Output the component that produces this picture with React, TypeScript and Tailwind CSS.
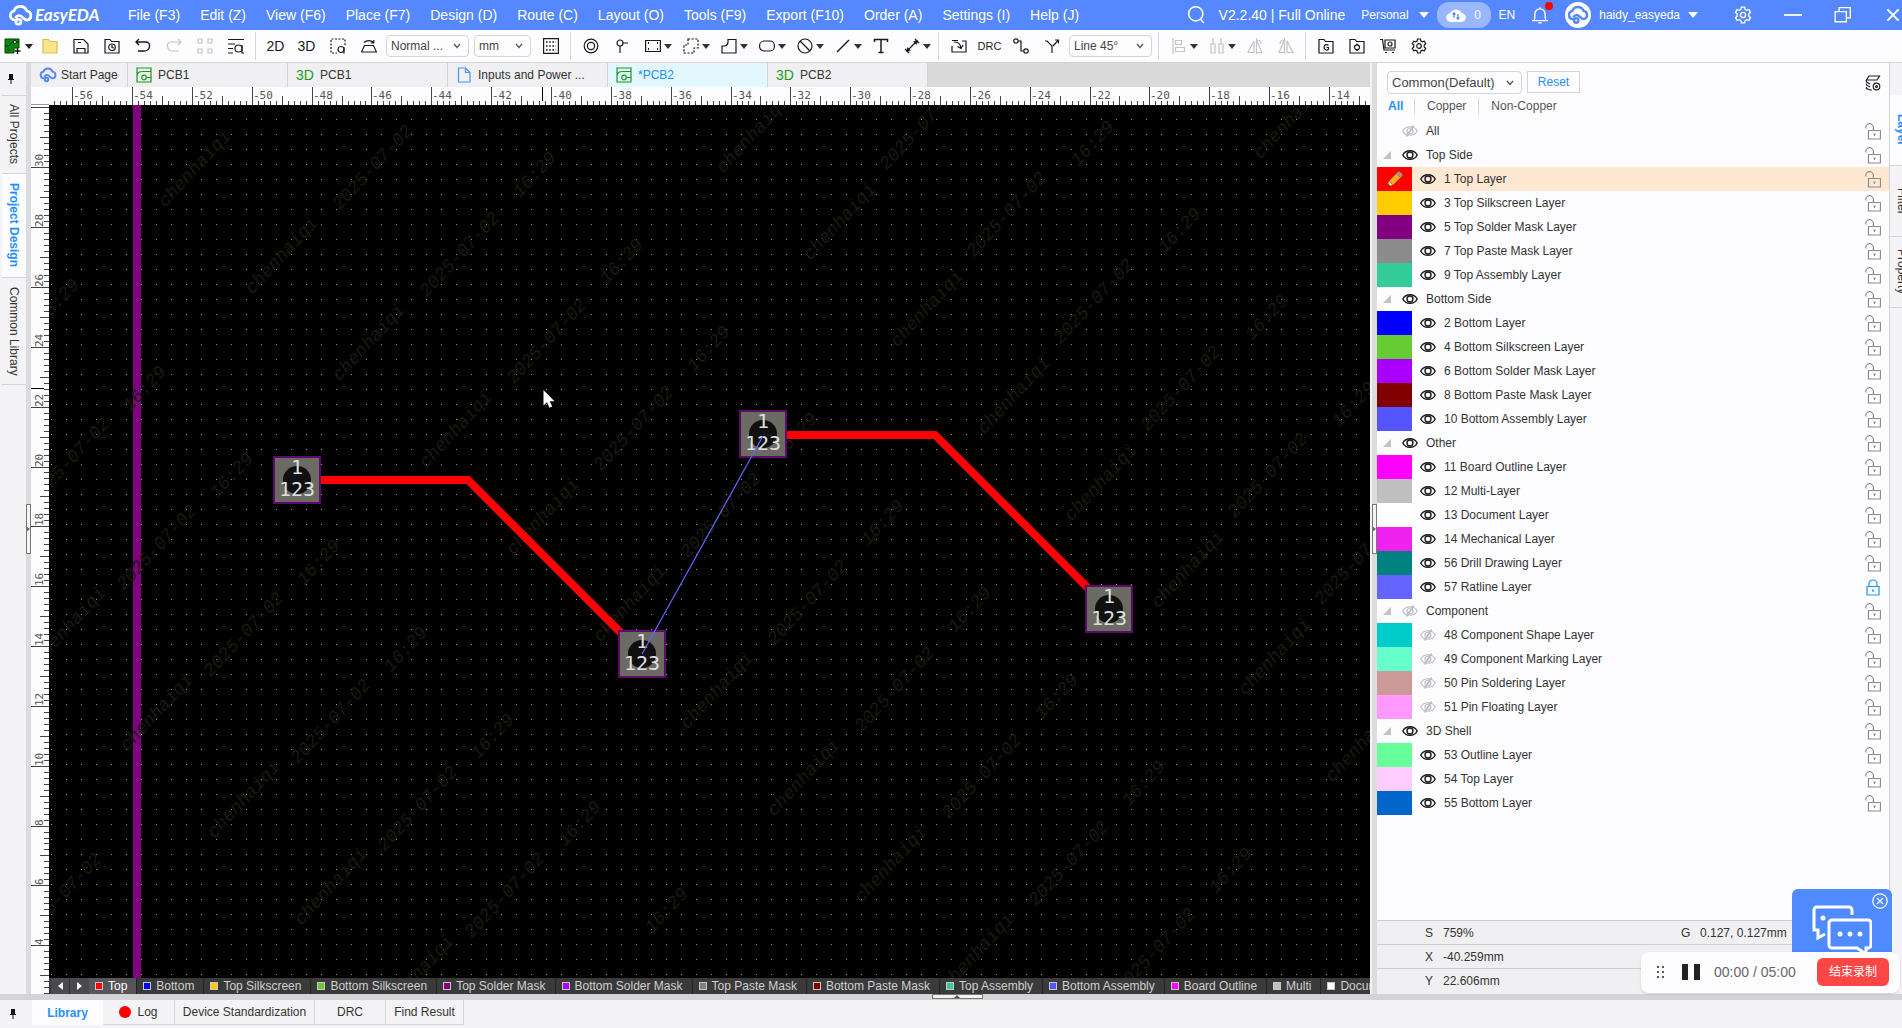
import type { ReactNode } from "react";

const menus = [
  "File (F3)", "Edit (Z)", "View (F6)", "Place (F7)", "Design (D)", "Route (C)", "Layout (O)",
  "Tools (F9)", "Export (F10)", "Order (A)", "Settings (I)", "Help (J)",
];

type Layer = { name: string; color?: string; group?: boolean; hidden?: boolean; locked?: boolean; active?: boolean };

const layers: Layer[] = [
  { name: "Top Side", group: true },
  { name: "1 Top Layer", color: "#ff0000", active: true },
  { name: "3 Top Silkscreen Layer", color: "#ffcc00" },
  { name: "5 Top Solder Mask Layer", color: "#800080" },
  { name: "7 Top Paste Mask Layer", color: "#8c8c8c" },
  { name: "9 Top Assembly Layer", color: "#33cc99" },
  { name: "Bottom Side", group: true },
  { name: "2 Bottom Layer", color: "#0000ff" },
  { name: "4 Bottom Silkscreen Layer", color: "#66cc33" },
  { name: "6 Bottom Solder Mask Layer", color: "#aa00ff" },
  { name: "8 Bottom Paste Mask Layer", color: "#800000" },
  { name: "10 Bottom Assembly Layer", color: "#5555ff" },
  { name: "Other", group: true },
  { name: "11 Board Outline Layer", color: "#ff00ff" },
  { name: "12 Multi-Layer", color: "#c0c0c0" },
  { name: "13 Document Layer", color: "#ffffff" },
  { name: "14 Mechanical Layer", color: "#f022f0" },
  { name: "56 Drill Drawing Layer", color: "#008080" },
  { name: "57 Ratline Layer", color: "#6464ff", locked: true },
  { name: "Component", group: true, hidden: true },
  { name: "48 Component Shape Layer", color: "#00cccc", hidden: true },
  { name: "49 Component Marking Layer", color: "#66ffcc", hidden: true },
  { name: "50 Pin Soldering Layer", color: "#cc9999", hidden: true },
  { name: "51 Pin Floating Layer", color: "#ff99ff", hidden: true },
  { name: "3D Shell", group: true },
  { name: "53 Outline Layer", color: "#66ff99" },
  { name: "54 Top Layer", color: "#ffccff" },
  { name: "55 Bottom Layer", color: "#0066cc" },
];

const layerTabs = [
  ["Top", "#ff0000"], ["Bottom", "#0000ff"], ["Top Silkscreen", "#ffcc00"], ["Bottom Silkscreen", "#66cc33"],
  ["Top Solder Mask", "#800080"], ["Bottom Solder Mask", "#aa00ff"], ["Top Paste Mask", "#808080"],
  ["Bottom Paste Mask", "#800000"], ["Top Assembly", "#33cc99"], ["Bottom Assembly", "#5555ff"],
  ["Board Outline", "#ff00ff"], ["Multi", "#c0c0c0"], ["Document", "#ffffff"],
];

function Svg({ children, s = 16, w = 1.2 }: { children: ReactNode; s?: number; w?: number }) {
  return (
    <svg width={s} height={s} viewBox="0 0 16 16" fill="none" stroke="currentColor" strokeWidth={w} className="shrink-0" aria-hidden="true">
      {children}
    </svg>
  );
}

const GearPath = () => (
  <>
    <path d="M6.6 1h2.8l.5 2 1.4.8 2-.6 1.4 2.4L13.200 7v2l1.500 1.400-1.400 2.400-2-.6-1.400.8-.5 2H6.600l-.5-2-1.400-.8-2 .6L1.300 10.400 2.800 9V7L1.300 5.600l1.400-2.400 2 .6L6.100 3z" />
    <circle cx="8" cy="8" r="2.300" />
  </>
);

function Caret({ className = "" }: { className?: string }) {
  return (
    <svg width="10" height="6" viewBox="0 0 10 6" fill="currentColor" className={className} aria-hidden="true">
      <path d="M0 0h10L5 6z" />
    </svg>
  );
}

function Tool({ label, children, menu, off }: { label: string; children: ReactNode; menu?: boolean; off?: boolean }) {
  return (
    <button aria-label={label} className={`flex h-8 shrink-0 items-center ${menu ? "w-[38px]" : "w-[31px]"} ${off ? "text-[#c4c4c4]" : "text-[#1a1a1a]"}`}>
      <span className="flex w-[31px] shrink-0 justify-center">{children}</span>
      {menu && <Caret className="-ml-1 h-[5px] w-2 shrink-0 text-[#333]" />}
    </button>
  );
}

const Sep = () => <span className="mx-1 h-7 w-px shrink-0 bg-[#d4d4dc]" />;

function Pick({ label, value, className }: { label: string; value: string; className: string }) {
  return (
    <div className={`relative shrink-0 ${className}`}>
      <select aria-label={label} className="h-full w-full appearance-none rounded-sm border border-[#d4d4d8] bg-[#fdfdff] pl-1 text-[#444]">
        <option>{value}</option>
      </select>
      <svg width="8" height="6" viewBox="0 0 8 6" fill="none" stroke="#555" strokeWidth="1.3" className="pointer-events-none absolute top-1/2 right-2 -mt-[3px]">
        <path d="M1 1l3 3.500L7 1" />
      </svg>
    </div>
  );
}

function CloudLogo({ s, color }: { s: number; color: string }) {
  return (
    <svg width={s} height={s} viewBox="0 0 24 24" fill="none" stroke={color} strokeWidth="2.600" aria-hidden="true">
      <path d="M9 16.500H6.500a4.500 4.500 0 0 1-.7-8.900A6.500 6.500 0 0 1 18 7.500a4.600 4.600 0 0 1 .5 9c-4 .3-4-4.500-8-4.500-2 0-2.500 1-3.500 2.500" />
      <circle cx="10" cy="18" r="2.400" />
    </svg>
  );
}

function BoardIcon() {
  return (
    <Svg>
      <path stroke="#1a9a1a" d="M1 1h14v14H1zM1 9c0-4 3-4.500 6-4.500h8M10.500 10.500H15" />
      <circle cx="8" cy="10.500" r="2.300" stroke="#1a9a1a" />
    </Svg>
  );
}

const ThreeD = ({ className = "" }: { className?: string }) => (
  <span className={`w-[18px] shrink-0 text-sm leading-4 ${className}`}>3D</span>
);

function Eye({ off }: { off?: boolean }) {
  return (
    <svg width="16" height="12" viewBox="0 0 16 12" fill="none" stroke={off ? "#bdbdc4" : "#1a1a1a"} strokeWidth={off ? 1.1 : 1.4} aria-hidden="true">
      <path d="M.8 6C3.500.3 12.500.3 15.200 6 12.500 11.700 3.500 11.700.8 6z" />
      <circle cx="8" cy="6" r="3" />
      {off && <path d="M11.500.5L4.500 11.500" strokeWidth="1.800" />}
    </svg>
  );
}

function Lock({ closed }: { closed?: boolean }) {
  return (
    <svg width="16" height="17" viewBox="0 0 16 17" fill="none" stroke={closed ? "#1e90ff" : "#8c8c8c"} strokeWidth="1.200" aria-hidden="true">
      {closed ? (
        <path d="M2 7.500h12v8.500H2zM4 7.500V5a4 4 0 0 1 8 0v2.500M8 10.500v2.500M7 11h2" />
      ) : (
        <path d="M3.500 7.500h12v8.500h-12zM.8 5.500V4.500a3.800 3.800 0 0 1 7.600 0v3M9.500 10.500v2.500M8.500 11h2" />
      )}
    </svg>
  );
}

function Header() {
  return (
    <header className="flex h-[30px] shrink-0 items-center bg-[#5588ff] text-white">
      <div className="flex w-[118px] shrink-0 items-center pl-2">
        <CloudLogo s={25} color="#fff" />
        <span className="ml-0.5 font-['Lato'] text-[17px] font-bold italic">EasyEDA</span>
      </div>
      <nav className="flex text-sm whitespace-nowrap">
        {menus.map((m) => (
          <button key={m} className="px-[10px]">{m}</button>
        ))}
      </nav>
      <div className="ml-auto flex shrink-0 items-center text-xs whitespace-nowrap">
        <button aria-label="Search" className="mr-3">
          <Svg s={20}><circle cx="7" cy="7" r="5.700" /><path d="M11 11.500l2.500 3" /></Svg>
        </button>
        <span className="text-sm">V2.2.40 | Full Online</span>
        <button className="ml-4 flex items-center gap-[10px]">Personal <Caret /></button>
        <button className="ml-2 flex h-[26px] w-[54px] items-center justify-center gap-2 rounded-xl bg-white/40">
          <svg width="20" height="16" viewBox="0 0 20 16" fill="#fff" aria-hidden="true">
            <path d="M5 15a4.500 4.500 0 0 1-.5-9A6 6 0 0 1 15.500 6a4.500 4.500 0 0 1-.5 9z" />
            <path d="M8 11V6M6.500 7.500L8 6l1.500 1.500M12 7v5M10.500 10.500L12 12l1.500-1.500" fill="none" stroke="#5588ff" strokeWidth="1.300" />
          </svg>
          0
        </button>
        <button className="ml-2">EN</button>
        <button aria-label="Notifications" className="relative ml-4">
          <Svg s={18}><path d="M1 13h14M3 13c0-2 .5-2 .5-6a4.500 4.500 0 0 1 9 0c0 4 .5 4 .5 6M6.500 15h3M8 1v1.500" /></Svg>
          <span className="absolute -top-1 -right-1 size-2 rounded-full bg-[#f00]" />
        </button>
        <span className="ml-4 flex size-[26px] items-center justify-center rounded-full bg-white">
          <CloudLogo s={22} color="#5588ff" />
        </span>
        <button className="ml-2 flex items-center gap-2">haidy_easyeda <Caret /></button>
        <button aria-label="Preferences" className="ml-9"><Svg s={18}><GearPath /></Svg></button>
        <button aria-label="Minimize" className="ml-8"><Svg s={18} w={1.6}><path d="M0 8h16" /></Svg></button>
        <button aria-label="Restore" className="ml-8"><Svg s={18}><path d="M1 5h10v9H1zM4.500 5V1.500h10v9H11" /></Svg></button>
        <button aria-label="Close" className="ml-8"><Svg s={18} w={1.8}><path d="M3 3l10 10M13 3L3 13" /></Svg></button>
      </div>
    </header>
  );
}

function Toolbar() {
  return (
    <div className="flex h-[33px] shrink-0 items-center border-b border-[#d4d4d4] bg-[#fdfdff] text-xs">
      <button aria-label="New" className="flex w-[34px] items-center gap-1 pl-1 text-[#222]">
        <svg width="17" height="17" viewBox="0 0 17 17" aria-hidden="true">
          <path d="M1 1h14v9h-5v5H1z" fill="#0a8a0a" stroke="#063f06" />
          <path d="M1 8h4l3-4h7M3 12h3" stroke="#022" fill="none" />
          <circle cx="11" cy="4" r="1.500" fill="#fff" stroke="#022" />
          <path d="M13.500 10v6M10.500 13h6" stroke="#111" strokeWidth="1.300" />
        </svg>
        <Caret className="h-[5px] w-2" />
      </button>
      <Tool label="Open"><Svg><path d="M1 1.500h5.500L8 3.500h7v11.500H1z" fill="#fbe58c" stroke="#d9bf55" /></Svg></Tool>
      <Tool label="Save"><Svg><path d="M1 1.500h9.500L15 6v9H1zM4 15v-4.500h8V15M5 4.500h3" /></Svg></Tool>
      <Tool label="Open recent"><Svg><path d="M1 1.500h5L7.500 3.500H15V15H1z" /><circle cx="8" cy="9.300" r="3.300" /><path d="M8 7v2.500l2 .5" /></Svg></Tool>
      <Tool label="Undo"><Svg w={1.4}><path d="M1 4h10a3.500 3.500 0 0 1 3.500 4.500c-.5 3-3 4.500-5.500 4.500H3M4 1L1 4l3 3" /></Svg></Tool>
      <Tool label="Redo" off><Svg><path d="M15 4H5a3.500 3.500 0 0 0-3.500 4.500c.5 3 3 4.500 5.500 4.500h6M12 1l3 3-3 3" /></Svg></Tool>
      <Tool label="Arrange" off><Svg><path d="M1 1h4v4H1zM11 1h4v4h-4zM1 11h4v4H1zM11 11h4v4h-4z" /></Svg></Tool>
      <Tool label="Find"><Svg><path d="M0 1.500h16M0 6h7M0 10.500h5M0 15h5" /><circle cx="10.500" cy="10.500" r="3.500" /><path d="M14 7v8h2" /></Svg></Tool>
      <Sep />
      <Tool label="2D view"><span className="text-sm">2D</span></Tool>
      <Tool label="3D view"><span className="text-sm">3D</span></Tool>
      <Tool label="Zoom to selection"><Svg><path d="M15 7V1H1v14h6" strokeDasharray="2 1.500" /><circle cx="11" cy="11.500" r="3" /><path d="M14 9v6.500" /></Svg></Tool>
      <Tool label="Flip board"><Svg><path d="M3.500 7.500h9l3 6.500H.5zM3 4.500c2.500-2.500 7-2.500 9.500 0M12.800 2v3H9.800" /></Svg></Tool>
      <Pick label="Display mode" value="Normal ..." className="ml-0.5 h-[22px] w-[83px]" />
      <Pick label="Unit" value="mm" className="mr-1 ml-[5px] h-[22px] w-[57px]" />
      <Tool label="Grid"><Svg><path d="M.6.600h14.800v14.800H.6z" /><path d="M3 4h10M3 8h10M3 12h10" strokeDasharray="1.600 1.600" strokeWidth="1.600" /></Svg></Tool>
      <Sep />
      <Tool label="Via"><Svg><circle cx="8" cy="8" r="6.800" /><circle cx="8" cy="8" r="3.600" /></Svg></Tool>
      <Tool label="Pad"><Svg><circle cx="6" cy="5" r="3" /><path d="M9 5h5M6 8v7" /></Svg></Tool>
      <Tool label="Rectangle" menu><Svg><path d="M.6 2.500h14.800v11H.6z" /><path d="M3 5h1M12 5h1M3 11h1M12 11h1" strokeWidth="1.800" /></Svg></Tool>
      <Tool label="Region" menu><Svg><path d="M5 1h10v9h-4v5H1V7h4z" strokeDasharray="2.200 1.400" /></Svg></Tool>
      <Tool label="Copper" menu><Svg><path d="M7 1.500h8V15H1V8h3c2-.5 3-2 3-4z" /></Svg></Tool>
      <Tool label="Slot" menu><Svg><rect x=".6" y="3" width="14.800" height="10" rx="4.500" /></Svg></Tool>
      <Tool label="Forbidden region" menu><Svg><circle cx="8" cy="8" r="7" /><path d="M3 3l10 10" /></Svg></Tool>
      <Tool label="Line" menu><Svg w={1.5}><path d="M2 14L14 2" /></Svg></Tool>
      <Tool label="Text"><Svg w={1.5}><path d="M1.500 4V1.500h13V4M8 1.500v13M5.500 14.500h5" /></Svg></Tool>
      <Tool label="Dimension" menu><Svg><path d="M3.500 12.500l9-9M1 11l4 4M11 1l4 4" /><path d="M2.500 13.500l1-4 3 3zM13.500 2.500l-1 4-3-3z" fill="currentColor" strokeWidth=".5" /></Svg></Tool>
      <Sep />
      <Tool label="Import changes"><Svg><path d="M7 2.500H1M11 3h4v11H1V8M3 4c4 0 6 1 7 6M6.500 8.500L10 10.500l2-3.500" /></Svg></Tool>
      <Tool label="Design rule check"><span className="text-[11px]">DRC</span></Tool>
      <Tool label="Single route"><Svg><circle cx="3" cy="3" r="2.200" /><circle cx="13" cy="13" r="2.200" /><path d="M5.200 3H8v10h2.800" /></Svg></Tool>
      <Tool label="Differential route"><Svg><path d="M1 3h2l5 5v7M9 8l5-5.500M11 2h3.500v3.500" /></Svg></Tool>
      <Pick label="Routing corner" value="Line 45°" className="mr-0.5 ml-0.5 h-[22px] w-[83px]" />
      <Sep />
      <Tool label="Align" menu off><Svg><path d="M2 0v16M4.500 2.500h6v4h-6zM4.500 9.500h9v4h-9z" /></Svg></Tool>
      <Tool label="Distribute" menu off><Svg><path d="M4 0v6M12 0v6M2 6h4v9H2zM10 6h4v9h-4z" /></Svg></Tool>
      <Tool label="Mirror" off><Svg><path d="M7 3v11.500H1zM9.500 0v16M10 3l5 11.500h-5M10 2c3 0 4 1.500 4 4" /></Svg></Tool>
      <Tool label="Flip" off><Svg><path d="M9 3v11.500h6zM6.500 0v16M6 3L1 14.500h5M2 6c0-2.500 1-4 4-4" /></Svg></Tool>
      <Sep />
      <Tool label="Gerber"><Svg><path d="M1 1.500h5L7.500 3.500H15V15H1z" /><path d="M10.500 7.500c-1-1.500-4.500-1.300-4.500 1.800s3.500 3.400 4.500 1.800V9.500H8.500" /></Svg></Tool>
      <Tool label="Pick and place"><Svg><path d="M1 1.500h5L7.500 3.500H15V15H1z" /><circle cx="8" cy="9.300" r="2.500" /><path d="M8 5.500v2M8 11v2M5 9.300h1M10 9.300h1" /></Svg></Tool>
      <Tool label="Order"><Svg><path d="M0 1.500h2.500L4 12h11M5 2h10v8H5zM5 14.500h2M12 14.500h2" /><circle cx="10" cy="6" r="2" /></Svg></Tool>
      <Tool label="Settings"><Svg><GearPath /></Svg></Tool>
    </div>
  );
}

function DocTabs() {
  const tabs = [
    { icon: <BoardIcon />, name: "PCB1" },
    { icon: <ThreeD className="text-[#1a9a1a]" />, name: "PCB1" },
    { icon: <Svg><path stroke="#4a90ff" d="M2.500 1h7L14 5.500V15H2.500zM9.500 1v4.500H14" /></Svg>, name: "Inputs and Power ..." },
    { icon: <BoardIcon />, name: "*PCB2", active: true },
    { icon: <ThreeD className="text-[#1a9a1a]" />, name: "PCB2" },
  ];
  return (
    <div role="tablist" className="flex h-6 shrink-0 bg-[#d9d9d9] text-xs text-[#333]">
      <button role="tab" className="flex w-[97px] items-center gap-1 border-r border-[#d4d4d4] bg-[#f0f0f2] pl-2 whitespace-nowrap">
        <CloudLogo s={18} color="#5588ff" />Start Page
      </button>
      {tabs.map((t, i) => (
        <button
          key={i}
          role="tab"
          aria-selected={!!t.active}
          className={`flex w-40 items-center gap-[6px] border-r border-[#d4d4d4] pl-2 whitespace-nowrap ${t.active ? "bg-[#e2f7ff] text-[#1e90ff]" : "bg-[#f0f0f2]"}`}
        >
          {t.icon}
          <span>{t.name}</span>
        </button>
      ))}
    </div>
  );
}

// 1mm is 29.92px at the current zoom
const MM = 29.92;

function TopRuler() {
  const ticks = [];
  for (let i = -285; i <= -60; i++) ticks.push(i);
  return (
    <svg className="block h-[18px] w-full shrink-0 bg-[#fdfdff]" aria-hidden="true">
      {ticks.map((i) => {
        const x = Math.round(1716.8 + (i / 5) * MM);
        const top = i % 10 === 0 ? 0 : i % 5 === 0 ? 9 : 14;
        return x > 20 && <rect key={i} x={x} y={top} width="1" height={18 - top} fill="#444" />;
      })}
      {ticks.filter((i) => i % 10 === 0).map((i) => (
        <text key={i} x={Math.round(1716.8 + (i / 5) * MM) + 1} y="12" fontSize="11" fill="#555" className="font-['DejaVu_Sans_Mono']">{i / 5}</text>
      ))}
      <rect x="511" y="0" width="1" height="14" fill="#000" />
      <rect x="0" y="17" width="18" height="1" fill="#999" />
    </svg>
  );
}

function SideRuler() {
  const ticks = [];
  for (let i = 12; i <= 160; i++) ticks.push(i);
  const at = (i: number) => Math.round(62.3 + (30 - i / 5) * MM);
  return (
    <svg className="block w-[18px] shrink-0 bg-[#fdfdff]" aria-hidden="true">
      {ticks.map((i) => {
        const w = i % 10 === 0 ? 18 : i % 5 === 0 ? 9 : 5;
        return <rect key={i} x={18 - w} y={at(i)} width={w} height="1" fill="#444" />;
      })}
      {ticks.filter((i) => i % 10 === 0 && i < 160).map((i) => (
        <text key={i} transform={`translate(12 ${at(i)}) rotate(-90)`} fontSize="11" fill="#555" className="font-['DejaVu_Sans_Mono']">{i / 5}</text>
      ))}
      <rect x="0" y="283" width="13" height="1" fill="#000" />
    </svg>
  );
}

// text, first centre x/y, repeat count; repeats run down the diagonal
const marks: [string, number, number, number][] = [
  ["chenhaiqi", 145, 63, 10], ["2025-07-02", 323, 62, 10], ["16:29", 485, 69, 9],
  ["chenhaiqi", 703, 29, 8], ["2025-07-02", 870, 22, 6], ["16:29", 1043, 38, 4],
  ["16:29", 8, 196, 8], ["2025-07-02", 20, 355, 6], ["chenhaiqi", 20, 520, 5],
  ["chenhaiqi", 1240, 15, 1], ["2025-07-02", 12, 790, 1],
];

function Pad({ x, y }: { x: number; y: number }) {
  return (
    <g className="font-['DejaVu_Sans_Mono']" fontSize="20" fill="#dedede" textAnchor="middle">
      <rect x={x - 23} y={y - 23} width="46" height="46" fill="#6b6b64" stroke="#5c0a6c" strokeWidth="2" />
      <circle cx={x} cy={y} r="14" fill="#101010" />
      <text x={x} y={y - 6}>1</text>
      <text x={x} y={y + 16}>123</text>
    </g>
  );
}

function Board() {
  return (
    <svg className="block min-h-0 w-full flex-1 bg-black">
      <defs>
        <pattern id="dots" width="15" height="15" patternUnits="userSpaceOnUse">
          <rect x="2" y="14" width="1" height="1" fill="#9a9a9a" />
        </pattern>
      </defs>
      <rect width="100%" height="100%" fill="url(#dots)" />
      <rect x="84" width="8" height="100%" fill="#800080" />
      <g fontSize="18" fontStyle="italic" fill="#1b1b0e" textAnchor="middle" className="font-['Liberation_Mono']">
        {marks.flatMap(([text, x, y, n]) =>
          Array.from({ length: n }, (_, k) => (
            <text key={`${text}${x}-${k}`} transform={`translate(${x + k * 87} ${y + k * 87}) rotate(-47)`} y="6">{text}</text>
          ))
        )}
      </g>
      <path d="M248 375H419L593 549M714 330H886L1060 504" fill="none" stroke="#f00" strokeWidth="8" />
      <Pad x={248} y={375} />
      <Pad x={714} y={329} />
      <Pad x={593} y={549} />
      <Pad x={1060} y={504} />
      <path d="M714 331L593 549" stroke="#6464ff" strokeWidth="1.200" />
      <path d="M494.500 285v15.500l3.500-3.200 2.500 5.500 2.700-1.200-2.500-5.300h4.800z" fill="#fff" />
    </svg>
  );
}

function LayerTabs() {
  return (
    <div className="flex h-4 shrink-0 overflow-hidden bg-[#3a3a3a] text-xs leading-4 text-[#d0d0d0]">
      <div className="ml-0.5 flex w-[38px] shrink-0 bg-[#4a4a4e]">
        <button aria-label="Previous" className="flex w-[19px] items-center justify-center border-r border-[#333]">
          <svg width="5" height="8" viewBox="0 0 5 8" fill="#fff"><path d="M5 0v8L0 4z" /></svg>
        </button>
        <button aria-label="Next" className="flex w-[19px] items-center justify-center">
          <svg width="5" height="8" viewBox="0 0 5 8" fill="#fff"><path d="M0 0v8l5-4z" /></svg>
        </button>
      </div>
      {layerTabs.map(([name, color], i) => (
        <button key={name} className={`flex shrink-0 items-center gap-[5px] border-r border-[#222] pr-[9px] pl-[6px] whitespace-nowrap ${i === 0 ? "bg-[#55555a] text-white" : ""}`}>
          <span className="size-2 border border-[#c8c8c8]" style={{ backgroundColor: color }} />
          {name}
        </button>
      ))}
    </div>
  );
}

function LayerRow({ layer }: { layer: Layer }) {
  return (
    <li className={`flex h-6 items-center ${layer.active ? "bg-[#ffe8d2]" : ""}`}>
      {layer.group ? (
        <span className="flex w-[25px] pl-[6px]">
          <svg width="8" height="8" viewBox="0 0 8 8" fill="#c0c0c0"><path d="M8 0v8H0z" /></svg>
        </span>
      ) : (
        <span className="flex h-6 w-[43px] items-center">
          <span className="flex h-6 w-[35px] items-center justify-center" style={{ backgroundColor: layer.color }}>
            {layer.active && (
              <svg width="16" height="16" viewBox="0 0 16 16" aria-hidden="true">
                <path d="M.5 15.500L2 10l4 4z" fill="#f3d7a0" />
                <path d="M.5 15.500l.7-2.500 1.800 1.800z" fill="#222" />
                <path d="M2 10l7.500-7.500 4 4L6 14z" fill="#f2b21b" stroke="#a86a00" strokeWidth=".6" />
                <path d="M9.500 2.500l1.500-1.500q1-1 2 0l2 2q1 1 0 2l-1.500 1.500z" fill="#c98a78" stroke="#777" strokeWidth=".6" />
              </svg>
            )}
          </span>
        </span>
      )}
      <button aria-label={`Show ${layer.name}`}><Eye off={layer.hidden} /></button>
      <span className="ml-2 flex-1">{layer.name}</span>
      <button aria-label={`Lock ${layer.name}`} className="mr-2"><Lock closed={layer.locked} /></button>
    </li>
  );
}

function LayerPanel() {
  return (
    <aside className="flex w-[512px] shrink-0 flex-col bg-[#fdfdff] text-xs text-[#333]">
      <div className="flex h-8 items-start pt-2 pr-2 pl-[10px]">
        <Pick label="Layer preset" value="Common(Default)" className="h-[23px] w-[135px] text-[13px]" />
        <button className="ml-[5px] h-[22px] w-[53px] border border-[#d4d4dc] text-[#1e90ff]">Reset</button>
        <button aria-label="Layer manager" className="mt-1 ml-auto text-[#222]">
          <Svg><path d="M4 1h10.500L12 5H1.500zM1.500 5v2L5 9M1.500 8.500v1.500L5 12M1.500 12v1.500L5 15h2" /><circle cx="11.500" cy="11.500" r="3.300" /><circle cx="11.500" cy="11.500" r="1" /></Svg>
        </button>
      </div>
      <div className="flex h-6 items-center pb-[3px] pl-[11px] text-[#555]">
        <button className="w-[26px] text-left font-bold text-[#1e90ff]">All</button>
        <button className="h-4 border-l border-[#d8d8d8] px-3 leading-4">Copper</button>
        <button className="h-4 border-l border-[#d8d8d8] px-3 leading-4">Non-Copper</button>
      </div>
      <ul className="min-h-0 flex-1">
        <li className="flex h-6 items-center pl-[25px]">
          <button aria-label="Show all"><Eye off /></button>
          <span className="ml-2 flex-1">All</span>
          <button aria-label="Lock all" className="mr-2"><Lock /></button>
        </li>
        {layers.map((l) => <LayerRow key={l.name} layer={l} />)}
      </ul>
      <dl className="shrink-0 bg-[#f0f0f2] pb-0.5 text-[#333]">
        <div className="flex h-6 items-center border-t border-[#ccccd4] pl-12">
          <dt className="w-[18px]">S</dt><dd className="w-[238px]">759%</dd>
          <dt className="w-[19px]">G</dt><dd>0.127, 0.127mm</dd>
        </div>
        <div className="flex h-6 items-center border-t border-[#ccccd4] pl-12">
          <dt className="w-[18px]">X</dt><dd>-40.259mm</dd>
        </div>
        <div className="flex h-6 items-center border-t border-[#ccccd4] pl-12">
          <dt className="w-[18px]">Y</dt><dd>22.606mm</dd>
        </div>
      </dl>
    </aside>
  );
}

const Pin = () => (
  <svg width="6" height="10" viewBox="0 0 6 10" fill="#111" aria-hidden="true">
    <path d="M1 0h4v5h1v1H3.500v4h-1V6H0V5h1z" />
  </svg>
);

function Splitter({ className = "" }: { className?: string }) {
  return (
    <div className={`flex shrink-0 items-center bg-[#dcdcde] ${className}`}>
      <button aria-label="Toggle panel" className="flex h-[50px] w-[5px] items-center border border-[#777] bg-[#f4f4f4]">
        <svg width="4" height="6" viewBox="0 0 4 6" fill="#666"><path d="M0 0v6l4-3z" /></svg>
      </button>
    </div>
  );
}

function Recorder() {
  return (
    <div className="absolute right-0.5 bottom-[35px] flex h-[41px] w-[259px] items-center rounded-lg bg-[#fdfdff] pb-px shadow">
      <svg width="7" height="13" viewBox="0 0 7 13" fill="#555" className="ml-4" aria-hidden="true">
        {[0, 5, 10].map((y) => <path key={y} d={`M0 ${y}h2v2H0zM5 ${y}h2v2H5z`} />)}
      </svg>
      <button aria-label="Pause" className="ml-[18px] flex gap-[6px]">
        <span className="h-4 w-[6px] bg-[#222]" />
        <span className="h-4 w-[6px] bg-[#222]" />
      </button>
      <span className="ml-[14px] text-sm text-[#666]">00:00 / 05:00</span>
      <button className="mr-[11px] ml-auto h-7 w-[72px] rounded-md bg-[#fb4646] text-xs text-white">结束录制</button>
    </div>
  );
}

export default function App() {
  return (
    <div className="relative flex h-screen w-full flex-col overflow-hidden bg-[#f4f4f6] font-['Liberation_Sans','Noto_Sans_CJK_SC',sans-serif]">
      <Header />
      <Toolbar />

      <div className="flex min-h-0 flex-1">
        <nav className="flex w-[26px] shrink-0 flex-col text-xs text-[#333]">
          <button aria-label="Pin sidebar" className="flex h-8 items-center justify-center pr-1"><Pin /></button>
          {["All Projects", "Project Design", "Common Library"].map((t, i) => (
            <button
              key={t}
              className={`ml-0.5 flex items-center justify-center border-t border-[#d4d4d4] px-1 [writing-mode:vertical-rl] ${i === 0 ? "h-[78px]" : i === 1 ? "h-[104px] bg-[#fdfdff] font-bold text-[#1e90ff]" : "h-[108px] border-b"}`}
            >
              {t}
            </button>
          ))}
        </nav>
        <Splitter className="w-[5px]" />

        <main className="flex min-w-0 flex-1 flex-col">
          <DocTabs />
          <TopRuler />
          <div className="flex min-h-0 flex-1">
            <SideRuler />
            <div className="flex min-w-0 flex-1 flex-col">
              <Board />
              <LayerTabs />
            </div>
          </div>
        </main>

        <Splitter className="w-[7px] border-l-2 border-[#f4f4f6]" />
        <LayerPanel />
        <nav className="flex w-[13px] shrink-0 flex-col overflow-hidden border-l border-[#d4d4d4] pt-8 text-xs text-[#333]">
          {["Layer", "Filter", "Property"].map((t, i) => (
            <button
              key={t}
              className={`flex h-[71px] w-6 shrink-0 items-center justify-center border-b border-[#d4d4d4] leading-4 [writing-mode:vertical-rl] ${i === 0 ? "bg-[#fdfdff] font-bold text-[#1e90ff]" : ""}`}
            >
              {t}
            </button>
          ))}
        </nav>
      </div>

      <div className="flex h-[6px] shrink-0 justify-center bg-[#d4d4d6]">
        <button aria-label="Toggle bottom panel" className="ml-3 flex h-[5px] w-[51px] items-center justify-center border border-[#777] bg-[#f4f4f4]">
          <svg width="6" height="3" viewBox="0 0 6 3" fill="#555"><path d="M3 0l3 3H0z" /></svg>
        </button>
      </div>
      <footer className="flex h-7 shrink-0 items-start text-xs text-[#333]">
        <button aria-label="Pin panel" className="flex h-7 w-8 items-center pl-[10px]"><Pin /></button>
        <button className="h-[25px] w-[71px] bg-[#fdfdff] font-bold text-[#1e90ff]">Library</button>
        <button className="flex h-[25px] w-[72px] items-center justify-center gap-[6px] border-r border-b border-[#d4d4d4]">
          <span className="size-3 rounded-full bg-[#f00]" />Log
        </button>
        <button className="h-[25px] w-[140px] border-r border-b border-[#d4d4d4] whitespace-nowrap">Device Standardization</button>
        <button className="h-[25px] w-[71px] border-r border-b border-[#d4d4d4]">DRC</button>
        <button className="h-[25px] w-[78px] border-r border-b border-[#d4d4d4]">Find Result</button>
      </footer>

      <div className="absolute right-[10px] bottom-[60px] h-[79px] w-[100px] rounded-md bg-[#4f8bff]">
        <button aria-label="Open chat" className="absolute top-4 left-5">
          <svg width="60" height="50" viewBox="0 0 60 50" fill="none" stroke="#fff" strokeWidth="3">
            <path d="M39 9V4a3 3 0 0 0-3-3H4a3 3 0 0 0-3 3v20h4v8l7-4" transform="translate(1 1)" />
            <path d="M20 15h36a3 3 0 0 1 3 3v22a3 3 0 0 1-3 3h-2v6l-9-6H20a3 3 0 0 1-3-3V18a3 3 0 0 1 3-3z" />
            <g fill="#fff" stroke="none"><circle cx="11" cy="13" r="2.500" /><circle cx="28" cy="29" r="2.500" /><circle cx="38" cy="29" r="2.500" /><circle cx="48" cy="29" r="2.500" /></g>
          </svg>
        </button>
        <button aria-label="Close chat" className="absolute top-1 right-1 text-white">
          <Svg><circle cx="8" cy="8" r="7.200" /><path d="M5 5l6 6M11 5l-6 6" /></Svg>
        </button>
      </div>
      <Recorder />
    </div>
  );
}
